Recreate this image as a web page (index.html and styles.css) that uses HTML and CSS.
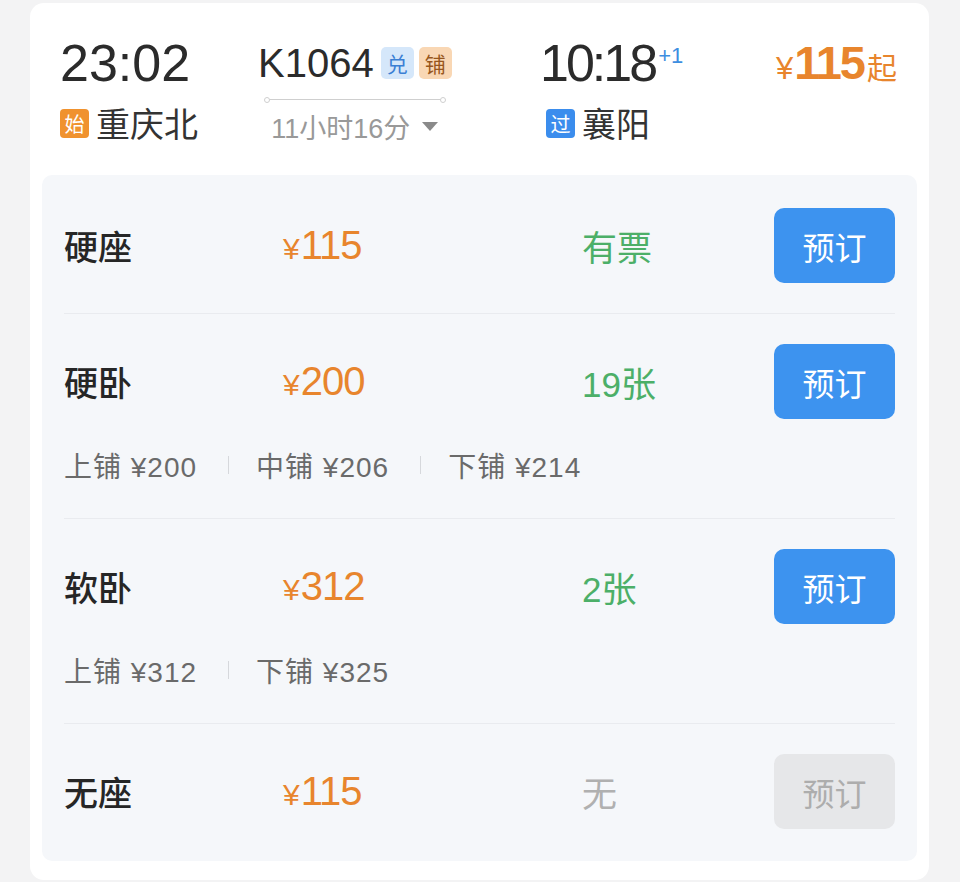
FILE: index.html
```html
<!DOCTYPE html>
<html lang="zh-CN">
<head>
<meta charset="utf-8">
<title>K1064</title>
<link rel="stylesheet" href="styles.css">
</head>
<body>
<div class="card">
  <div class="header">
    <div class="dep">
      <div class="time">23:02</div>
      <div class="station"><span class="tag tag-start">始</span><span class="sname">重庆北</span></div>
    </div>
    <div class="train">
      <div class="train-inner">
        <div class="train-no">
          <span class="tno">K1064</span>
          <span class="tb tb-blue">兑</span>
          <span class="tb tb-orange">铺</span>
        </div>
        <div class="train-line"></div>
        <div class="duration">11小时16分<span class="tri"></span></div>
      </div>
    </div>
    <div class="arr">
      <div class="time time-arr">10:18<span class="plus">+1</span></div>
      <div class="station station-arr"><span class="tag tag-pass">过</span><span class="sname">襄阳</span></div>
    </div>
    <div class="lowest">
      <span class="yen">¥</span><span class="amt">115</span><span class="qi">起</span>
    </div>
  </div>

  <div class="panel">
    <div class="row">
      <div class="main">
        <div class="seat">硬座</div>
        <div class="price"><span class="yen">¥</span>115</div>
        <div class="status">有票</div>
        <button class="book">预订</button>
      </div>
    </div>
    <div class="row">
      <div class="main">
        <div class="seat">硬卧</div>
        <div class="price"><span class="yen">¥</span>200</div>
        <div class="status">19张</div>
        <button class="book">预订</button>
      </div>
      <div class="sub">
        <span>上铺 ¥200</span><i class="sep"></i><span>中铺 ¥206</span><i class="sep"></i><span>下铺 ¥214</span>
      </div>
    </div>
    <div class="row">
      <div class="main">
        <div class="seat">软卧</div>
        <div class="price"><span class="yen">¥</span>312</div>
        <div class="status">2张</div>
        <button class="book">预订</button>
      </div>
      <div class="sub">
        <span>上铺 ¥312</span><i class="sep"></i><span>下铺 ¥325</span>
      </div>
    </div>
    <div class="row last">
      <div class="main">
        <div class="seat">无座</div>
        <div class="price"><span class="yen">¥</span>115</div>
        <div class="status none">无</div>
        <button class="book disabled">预订</button>
      </div>
    </div>
  </div>
</div>
</body>
</html>
```

FILE: styles.css
```css
* { box-sizing: border-box; }
html, body { margin: 0; padding: 0; }
body {
  background: #f3f3f4;
  font-family: "Liberation Sans", "Noto Sans CJK SC", sans-serif;
  color: #2b2b2b;
  width: 960px;
  height: 882px;
  overflow: hidden;
}
.card {
  margin: 3px 0 0 30px;
  width: 899px;
  height: 877px;
  background: #fff;
  border-radius: 14px;
  padding: 0 12px 19px 12px;
}
.header {
  display: flex;
  padding: 30px 20px 0 18px;
  height: 172px;
}
.dep { flex: 0 0 198px; }
.train { flex: 0 0 282px; }
.arr { flex: 1 1 auto; }
.time {
  font-size: 52px;
  line-height: 60px;
  height: 60px;
  color: #2b2b2b;
  white-space: nowrap;
}
.time-arr { letter-spacing: -3px; }
.plus {
  display: inline-block;
  font-size: 22px;
  color: #3d8ee0;
  vertical-align: top;
  line-height: 22px;
  margin-top: 12px;
  margin-left: 3px;
  letter-spacing: 0;
}
.station {
  display: flex;
  align-items: center;
  margin-top: 10px;
  height: 40px;
}
.station-arr { margin-left: 6px; }
.tag {
  display: inline-flex;
  align-items: center;
  justify-content: center;
  width: 29px;
  height: 29px;
  border-radius: 4px;
  color: #fff;
  font-size: 20px;
  font-family: "Noto Sans CJK SC", sans-serif;
  margin-right: 7px;
}
.tag-start { background: #f0922e; }
.tag-pass { background: #3b8ded; }
.sname {
  font-family: "Noto Sans CJK SC", sans-serif;
  font-size: 34px;
  color: #333;
  line-height: 40px;
}
.train-inner {
  display: inline-flex;
  flex-direction: column;
  align-items: center;
}
.train-no {
  display: flex;
  align-items: center;
  height: 60px;
}
.tno {
  font-size: 40px;
  color: #2b2b2b;
  margin-right: 7px;
}
.tb {
  display: inline-flex;
  align-items: center;
  justify-content: center;
  width: 33px;
  height: 32px;
  border-radius: 5px;
  font-size: 21px;
  font-family: "Noto Sans CJK SC", sans-serif;
}
.tb-blue { background: #d5e7fa; color: #3b7fd4; margin-right: 5px; }
.tb-orange { background: #f9d7b4; color: #97561c; }
.train-line {
  position: relative;
  width: 178px;
  height: 1px;
  background: #cfcfcf;
  margin-top: 6px;
}
.train-line::before, .train-line::after {
  content: "";
  position: absolute;
  top: -2px;
  width: 4px;
  height: 4px;
  border: 1px solid #cfcfcf;
  border-radius: 50%;
  background: #fff;
}
.train-line::before { left: -2px; }
.train-line::after { right: -2px; }
.duration {
  display: flex;
  align-items: center;
  margin-top: 11px;
  height: 30px;
  font-size: 27px;
  color: #999;
}
.tri {
  display: inline-block;
  width: 0;
  height: 0;
  border-left: 8px solid transparent;
  border-right: 8px solid transparent;
  border-top: 9px solid #8a8a8a;
  margin-left: 12px;
}
.lowest {
  display: flex;
  align-items: baseline;
  height: 60px;
  line-height: 60px;
  color: #e8852d;
  white-space: nowrap;
}
.lowest .yen { font-size: 31px; }
.lowest .amt { font-size: 47px; letter-spacing: -2px; font-weight: bold; margin-left: 1px; }
.lowest .qi { font-size: 30px; font-family: "Noto Sans CJK SC", sans-serif; margin-left: 3px; }

.panel {
  background: #f5f7fa;
  border-radius: 10px;
  height: 686px;
}
.row {
  margin: 0 22px;
  border-bottom: 1px solid #e9ebef;
  padding: 33px 0 30px;
}
.row.last { border-bottom: none; }
.row + .row { padding-top: 30px; }
.main {
  display: flex;
  align-items: center;
  height: 75px;
}
.seat {
  flex: 0 0 219px;
  font-family: "Noto Sans CJK SC", sans-serif;
  font-size: 34px;
  font-weight: 500;
  color: #262626;
}
.price {
  flex: 0 0 299px;
  font-size: 40px;
  color: #e8852d;
  letter-spacing: -1px;
}
.price .yen { font-size: 30px; margin-right: 2px; }
.status {
  flex: 1 1 auto;
  font-size: 35px;
  color: #4caf68;
}
.status.none { color: #b0b0b0; }
.book {
  flex: 0 0 121px;
  height: 75px;
  border: none;
  border-radius: 10px;
  background: #3d93ef;
  color: #fff;
  font-size: 32px;
  font-family: "Noto Sans CJK SC", sans-serif;
  padding: 0;
}
.book.disabled {
  background: #e6e7e9;
  color: #adadad;
}
.sub {
  display: flex;
  align-items: center;
  padding-top: 23px;
  height: 69px;
  font-size: 28px;
  letter-spacing: 1px;
  color: #6a6a6a;
}
.sub span { white-space: pre; }
.sep {
  display: inline-block;
  width: 1px;
  height: 18px;
  background: #d6d8dc;
  margin: 0 27px 0 31px;
}
```
